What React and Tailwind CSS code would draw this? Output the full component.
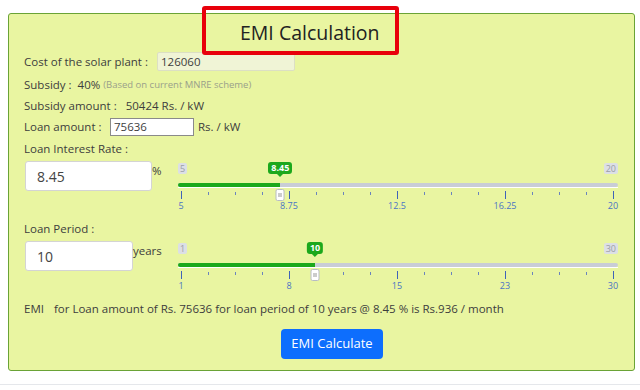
import React from 'react'

const ticks = Array.from({ length: 17 }, (_, i) => i)

function RangeSlider({ min, max, value, labels }) {
  const frac = (value - min) / (max - min)
  const x = 3 + frac * 432
  return (
    <div className="relative w-[440px] h-[56px]">
      {/* min / max */}
      <div className="absolute left-0 top-[1px] h-[11px] px-[2px] rounded-[2px] bg-[#dcdfe5] text-[9px] leading-[11px] text-[#9a9ea6]">{min}</div>
      <div className="absolute right-0 top-[1px] h-[11px] px-[2px] rounded-[2px] bg-[#dcdfe5] text-[9px] leading-[11px] text-[#9a9ea6]">{max}</div>

      {/* value bubble */}
      <div className="absolute top-0 -translate-x-1/2 flex flex-col items-center" style={{ left: x }}>
        <div className="h-[12px] px-[3px] rounded-[3px] bg-[#1ca81c] text-white text-[9px] font-bold leading-[12px]">{value}</div>
        <div className="w-0 h-0 border-x-[3px] border-x-transparent border-t-[3px] border-t-[#1ca81c]"></div>
      </div>

      {/* track */}
      <div className="absolute left-0 right-0 top-[21px] h-[4px] rounded-full bg-[#c9cdd6]"></div>
      <div className="absolute left-0 right-0 top-[25px] h-[1px] bg-white"></div>
      <div className="absolute left-0 top-[21px] h-[4px] rounded-l-full bg-[#1ca81c]" style={{ width: x }}></div>

      {/* ticks */}
      {ticks.map((i) => {
        const major = i % 4 === 0
        return (
          <div
            key={i}
            className={major ? 'absolute top-[29px] w-px h-[8px] bg-[#3f63b8]' : 'absolute top-[30px] w-px h-[3px] bg-[#6b84bd]'}
            style={{ left: 3 + i * 27 }}
          ></div>
        )
      })}

      {/* handle */}
      <div
        className="absolute top-[27px] -translate-x-1/2 w-[9px] h-[12px] rounded-[2px] bg-white border border-[#b8bcc4] flex items-center justify-center gap-px"
        style={{ left: x }}
      >
        <div className="w-px h-[4px] bg-[#999]"></div>
        <div className="w-px h-[4px] bg-[#999]"></div>
      </div>

      {/* labels */}
      {labels.map((l, i) => (
        <div
          key={l}
          className="absolute top-[38px] -translate-x-1/2 text-[9px] leading-[12px] text-[#4a74c4]"
          style={{ left: 3 + i * 108 }}
        >
          {l}
        </div>
      ))}
    </div>
  )
}

export default function App() {
  return (
    <div className="relative w-[640px] h-[390px] bg-white text-[#3d3d3d] text-[11.5px] overflow-hidden" style={{ fontFamily: '"Open Sans", "Noto Sans", sans-serif' }}>
      <div className="pt-[13px] pl-[8px]">
        <div className="w-[627px] h-[358px] border border-[#6aa336] rounded-[3px] bg-[#e9f5a1]">
          {/* Title */}
          <div className="h-[38px] pl-[231px] flex items-center text-[19.5px] text-[#222]">EMI Calculation</div>

          <div className="px-[15px] whitespace-nowrap">
            <div className="h-[19px] flex items-center">
              <span className="w-[133px]">Cost of the solar plant :</span>
              <div className="w-[138px] h-[19px] border border-[#dcdfc4] rounded-[2px] bg-[#f0f4d6] pl-[3px] leading-[17px]">126060</div>
            </div>

            <div className="h-[20px] mt-[4px] flex items-center">
              <span>Subsidy :&nbsp;&nbsp;40%</span>
              <span className="ml-[3px] text-[9.5px] text-[#9aa08a]">(Based on current MNRE scheme)</span>
            </div>

            <div className="h-[20px] mt-[1px] flex items-center">
              <span>Subsidy amount :&nbsp;&nbsp; 50424 Rs. / kW</span>
            </div>

            <div className="h-[18px] mt-[2px] flex items-center">
              <span className="w-[86px]">Loan amount :</span>
              <div className="w-[84px] h-[18px] border border-[#8a8a8a] bg-white pl-[3px] leading-[16px]">75636</div>
              <span className="ml-[4px]">Rs. / kW</span>
            </div>

            <div className="h-[20px] mt-[3px] flex items-center">Loan Interest Rate :</div>

            <div className="mt-[2px] flex">
              <div className="w-[127px] h-[30px] ml-[1px] border border-[#d4d4d4] rounded-[3px] bg-white pl-[11px] flex items-center text-[14px] text-[#444]">8.45</div>
              <span className="w-[26px] mt-[1px] leading-[18px]">%</span>
              <div className="pt-[1px]">
                <RangeSlider min={5} max={20} value={8.45} labels={['5', '8.75', '12.5', '16.25', '20']} />
              </div>
            </div>

            <div className="h-[20px] mt-[1px] flex items-center">Loan Period :</div>

            <div className="mt-[2px] flex">
              <div className="w-[108px] h-[30px] ml-[1px] border border-[#d4d4d4] rounded-[3px] bg-white pl-[11px] flex items-center text-[14px] text-[#444]">10</div>
              <span className="w-[45px] mt-[1px] leading-[18px]">years</span>
              <div className="pt-[1px]">
                <RangeSlider min={1} max={30} value={10} labels={['1', '8', '15', '23', '30']} />
              </div>
            </div>

            <div className="h-[20px] mt-[1px] flex items-center">
              <span>EMI</span>
              <span className="ml-[10px]">for Loan amount of Rs. 75636 for loan period of 10 years @ 8.45 % is Rs.936 / month</span>
            </div>

            <button className="mt-[10px] ml-[257px] w-[102px] h-[30px] rounded-[4px] bg-[#0d6efd] text-white text-[13px] font-medium">EMI Calculate</button>
          </div>
        </div>
      </div>

      <div className="mt-[13px] h-px bg-[#e5e7eb]"></div>

      {/* annotation box */}
      <div className="absolute left-[202px] top-[6px] w-[197px] h-[49px] border-4 border-[#e8000b] rounded-[3px]"></div>
    </div>
  )
}
